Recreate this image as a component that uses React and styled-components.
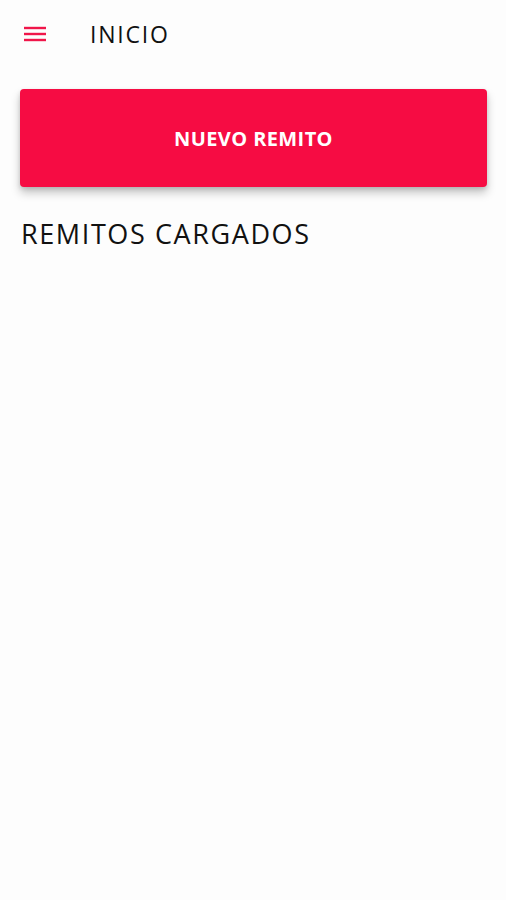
import React from "react";
import styled, { createGlobalStyle } from "styled-components";

const GlobalStyle = createGlobalStyle`
  html, body {
    margin: 0;
    padding: 0;
    background: #fdfdfd;
  }
  body {
    font-family: "Open Sans", "Noto Sans", sans-serif;
    color: #1a1a1a;
  }
`;

const Screen = styled.div`
  width: 506px;
  min-height: 900px;
  background: #fdfdfd;
`;

const Toolbar = styled.header`
  display: flex;
  align-items: center;
  height: 68px;
  padding: 0 0 0 24px;
  box-sizing: border-box;
`;

const MenuButton = styled.button`
  display: flex;
  align-items: center;
  justify-content: center;
  width: 22px;
  height: 22px;
  padding: 0;
  border: none;
  background: none;
  margin-right: 44px;
`;

const Title = styled.h1`
  margin: 0;
  font-size: 23px;
  font-weight: 400;
  letter-spacing: 1.8px;
  color: #111;
`;

const Content = styled.main`
  display: flex;
  flex-direction: column;
  padding: 21px 19px 0 20px;
`;

const PrimaryButton = styled.button`
  height: 98px;
  width: 100%;
  border: none;
  border-radius: 4px;
  background: #f60c43;
  color: #fff;
  font-family: "Open Sans", "Noto Sans", sans-serif;
  font-size: 20px;
  font-weight: 700;
  letter-spacing: 0.4px;
  box-shadow: 0 6px 10px rgba(0, 0, 0, 0.22), 0 2px 4px rgba(0, 0, 0, 0.12);
`;

const SectionTitle = styled.h2`
  margin: 28px 0 0 1px;
  font-size: 27px;
  font-weight: 400;
  letter-spacing: 1.6px;
  color: #111;
`;

function MenuIcon() {
  return (
    <svg width="22" height="16" viewBox="0 0 22 16">
      <g stroke="#f0164a" strokeWidth="2.4">
        <line x1="0" y1="2" x2="22" y2="2" />
        <line x1="0" y1="8" x2="22" y2="8" />
        <line x1="0" y1="14" x2="22" y2="14" />
      </g>
    </svg>
  );
}

export default function App() {
  return (
    <>
      <GlobalStyle />
      <Screen>
        <Toolbar>
          <MenuButton>
            <MenuIcon />
          </MenuButton>
          <Title>INICIO</Title>
        </Toolbar>
        <Content>
          <PrimaryButton>NUEVO REMITO</PrimaryButton>
          <SectionTitle>REMITOS CARGADOS</SectionTitle>
        </Content>
      </Screen>
    </>
  );
}
